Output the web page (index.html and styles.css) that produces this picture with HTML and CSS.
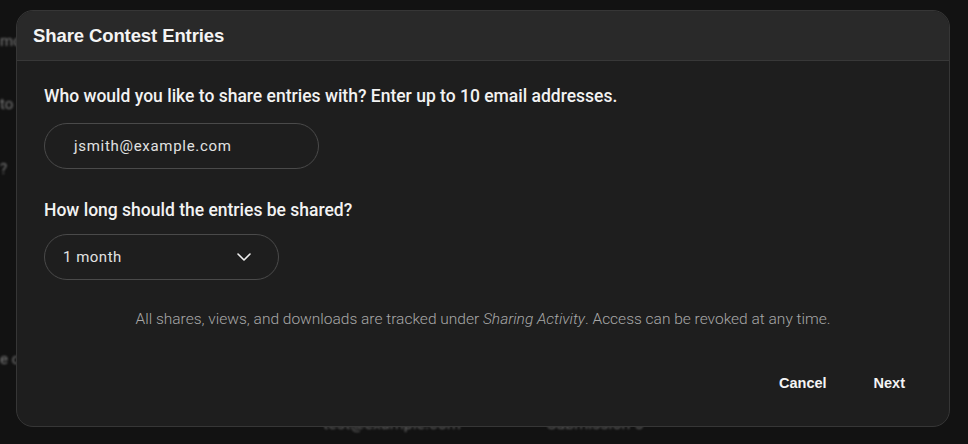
FILE: index.html
```html
<!DOCTYPE html>
<html>
<head>
<meta charset="utf-8">
<link rel="stylesheet" href="styles.css">
</head>
<body>
<div class="backdrop">
  <div class="bg-line l1">mo</div>
  <div class="bg-line l2">to</div>
  <div class="bg-line l3">?</div>
  <div class="bg-line l4">e c</div>
  <div class="bg-row">
    <span class="bg-email">test@example.com</span>
    <span class="bg-sub">Submission 5</span>
  </div>
</div>
<div class="dialog">
  <div class="dialog-header">
    <h1 class="title">Share Contest Entries</h1>
  </div>
  <div class="dialog-body">
    <p class="label">Who would you like to share entries with? Enter up to 10 email addresses.</p>
    <div class="field email-field">jsmith@example.com</div>
    <p class="label label-2">How long should the entries be shared?</p>
    <div class="field select-field">
      <span>1 month</span>
      <svg class="chevron" width="14" height="8" viewBox="0 0 14 8"><path d="M1 1 L7 7 L13 1" fill="none" stroke="#f0f0f0" stroke-width="1.6" stroke-linecap="round" stroke-linejoin="round"/></svg>
    </div>
    <p class="note">All shares, views, and downloads are tracked under <em>Sharing Activity</em>. Access can be revoked at any time.</p>
    <div class="actions">
      <button class="btn">Cancel</button>
      <button class="btn">Next</button>
    </div>
  </div>
</div>
</body>
</html>
```

FILE: styles.css
```css
html, body {
  margin: 0;
  padding: 0;
  width: 968px;
  height: 444px;
  overflow: hidden;
  background: #121212;
  font-family: Roboto, "Liberation Sans", sans-serif;
}

.backdrop {
  position: relative;
  width: 968px;
  height: 444px;
  filter: blur(1.2px);
  color: #7a7a7a;
  font-size: 15px;
}
.bg-line {
  position: absolute;
  left: 0;
  white-space: nowrap;
}
.l1 { top: 32px; }
.l2 { top: 95px; }
.l3 { top: 160px; }
.l4 { top: 350px; }
.bg-row {
  position: absolute;
  top: 414px;
  left: 323px;
  display: flex;
  gap: 86px;
  color: #666;
  font-size: 16px;
}

.dialog {
  position: absolute;
  left: 16px;
  top: 10px;
  width: 932px;
  height: 415px;
  border: 1px solid #363636;
  border-radius: 17px;
  background: #1e1e1e;
  overflow: hidden;
  display: flex;
  flex-direction: column;
}
.dialog-header {
  height: 49px;
  background: #292929;
  border-bottom: 1px solid #383838;
  display: flex;
  align-items: center;
  padding: 0 16px;
}
.title {
  margin: 0;
  font-family: "Liberation Sans", Arial, sans-serif;
  font-size: 18.5px;
  font-weight: 700;
  color: #f4f4f4;
  letter-spacing: -0.1px;
}
.dialog-body {
  padding: 23px 27px 0 27px;
  display: flex;
  flex-direction: column;
}
.label {
  margin: 0;
  font-size: 17.5px;
  line-height: 24px;
  font-weight: 500;
  color: #f2f2f2;
}
.label-2 { margin-top: 29px; }
.field {
  box-sizing: border-box;
  height: 46px;
  border: 1px solid #4a4a4a;
  border-radius: 23px;
  display: flex;
  align-items: center;
  color: #e2e2e2;
  font-size: 15px;
  letter-spacing: 0.7px;
}
.email-field {
  margin-top: 15px;
  width: 275px;
  padding-left: 29px;
}
.select-field {
  margin-top: 12px;
  width: 235px;
  padding: 0 27px 0 18px;
  justify-content: space-between;
  letter-spacing: 0.5px;
}
.chevron { display: block; }
.note {
  margin: 29px 0 0 0;
  text-align: center;
  font-size: 15.5px;
  line-height: 20px;
  font-weight: 300;
  color: #a8a8a8;
}
.note em { font-style: italic; }
.actions {
  margin-top: 38px;
  display: flex;
  justify-content: flex-end;
  padding-right: 2px;
}
.btn {
  background: none;
  border: none;
  color: #f4f4f4;
  font-family: "Liberation Sans", Arial, sans-serif;
  font-size: 14.5px;
  font-weight: 700;
  padding: 8px 15px;
  cursor: pointer;
}
.btn + .btn { margin-left: 17px; }
```
